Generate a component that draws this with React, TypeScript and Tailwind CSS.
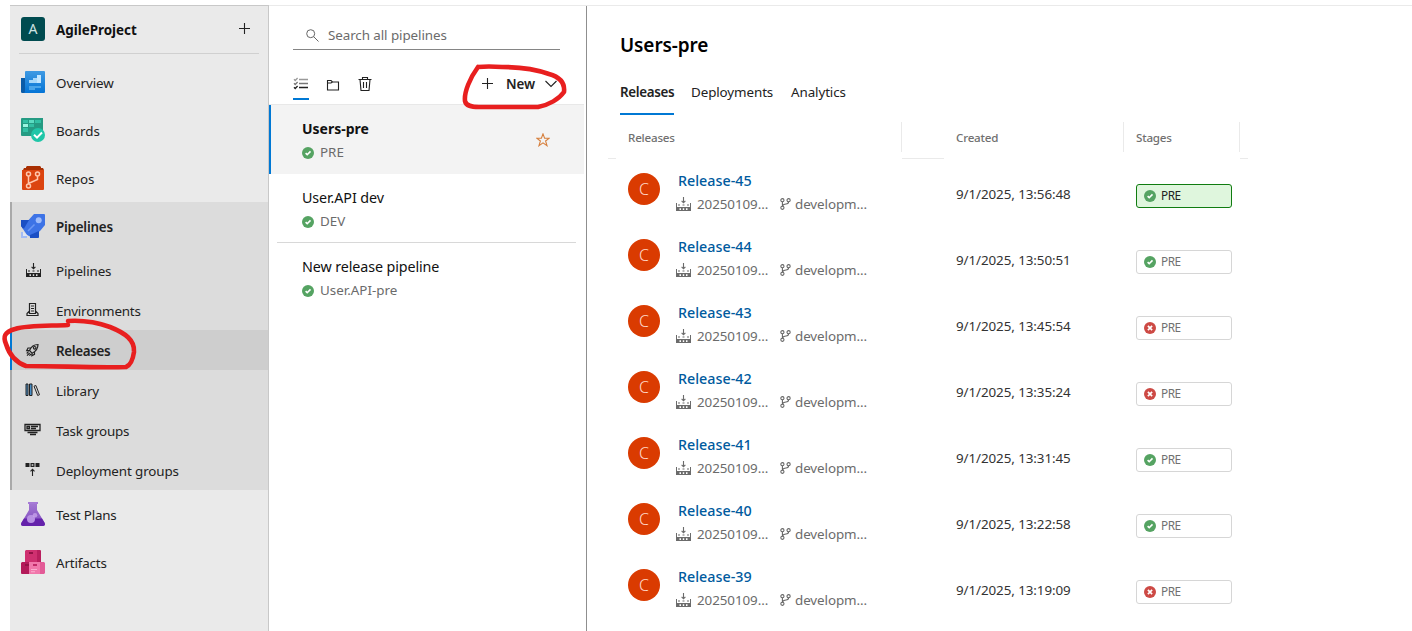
import React from 'react';

type IconProps = { className?: string };

const Check = ({ className = '' }: IconProps) => (
  <svg className={`h-3 w-3 shrink-0 ${className}`} viewBox="0 0 12 12">
    <circle cx="6" cy="6" r="6" fill="#55a362" />
    <path d="M3.6 6.2 5.2 7.7 8.5 4.4" fill="none" stroke="#fff" strokeWidth="1.6" />
  </svg>
);

const Fail = () => (
  <svg className="h-3 w-3 shrink-0" viewBox="0 0 12 12">
    <circle cx="6" cy="6" r="6" fill="#cd4a45" />
    <path d="M3.9 3.9 8.1 8.1M8.1 3.9 3.9 8.1" fill="none" stroke="#fff" strokeWidth="1.7" />
  </svg>
);

const Plus = () => (
  <svg className="h-3 w-3 shrink-0" viewBox="0 0 12 12">
    <path d="M5.5 0V11M0 5.5H11" fill="none" stroke="#222" strokeWidth="1.1" />
  </svg>
);

const OverviewIcon = () => (
  <svg className="h-6 w-6" viewBox="0 0 24 24">
    <defs>
      <linearGradient id="ov" x1="0" y1="0" x2="0" y2="1">
        <stop offset="0" stopColor="#3f9ae3" />
        <stop offset="1" stopColor="#0474d6" />
      </linearGradient>
    </defs>
    <path d="M0 8h4v15H1.2Q0 23 0 21.8z" fill="#0b5ca8" />
    <path d="M5 1h18q1 0 1 1v20q0 1-1 1H3q1-.5 1-2V2q0-1 1-1z" fill="url(#ov)" />
    <path d="M8 10h4V8h4V5h4v8H8z" fill="#a8d8fa" />
    <path d="M16 5h4v8h-4z" fill="#c3e6ff" />
    <path d="M8 16h12v2h-6v2H8z" fill="#4aa5ea" />
  </svg>
);

const BoardsIcon = () => (
  <svg className="h-6 w-6" viewBox="0 0 24 24">
    <path d="M1 0h21v18H1q-1 0-1-1V1q0-1 1-1z" fill="#259b83" />
    <path d="M2 2h5v3H2zM14 2h6v3h-6zM8 6h5v3H8zM2 10h5v4H2z" fill="#32c0a4" />
    <path d="M8 2h5v3H8z" fill="#5cdcc2" />
    <path d="M2 6h5v3H2z" fill="#9bf5e0" />
    <circle cx="17" cy="17" r="7" fill="#1fc6a8" />
    <path d="M13 16.8 16 19.7 21 14.5" fill="none" stroke="#fff" strokeWidth="2" />
  </svg>
);

const ReposIcon = () => (
  <svg className="h-6 w-6" viewBox="0 0 24 24">
    <path d="M6 0h13l1 1v1h2l1 2H2l1-2h2V1z" fill="#a92f02" />
    <path d="M1 4h22v19q0 1-1 1H2q-1 0-1-1z" fill="#dc4410" />
    <g fill="none" stroke="#ffc6ac" strokeWidth="1.5">
      <circle cx="7.5" cy="8" r="2" />
      <circle cx="16.5" cy="8" r="2" />
      <circle cx="7.5" cy="20" r="2" />
      <path d="M7.5 10v8M16.5 10v3.5L8 17.3" />
    </g>
  </svg>
);

const PipelinesBig = () => (
  <svg className="h-6 w-6" viewBox="0 0 24 24">
    <path d="M0 6h9l-4 9H2l-2-3zM9 19l9-8v12l-1 1H9z" fill="#174ac0" />
    <path d="M13 0h10q1 0 1 1v10l-5 6-9 6-4-2-4-6 2-5z" fill="#3d73e6" />
    <path d="M0 6h8l-5 8.5L0 12zM18 17v6l-1 1H9v-3z" fill="#1b4fc4" />
    <circle cx="17.7" cy="6.3" r="3" fill="#9fbdfb" />
    <path d="M7 17 13.5 10.5" stroke="#6b97f4" strokeWidth="1.6" />
    <path d="M0 18h2v4h4v2H0z" fill="#a3bcf5" />
    <path d="M2 17.5l5 4.5H2z" fill="#e0e6f3" />
  </svg>
);

const TestPlansIcon = () => (
  <svg className="h-6 w-6" viewBox="0 0 24 24">
    <defs>
      <linearGradient id="tp" x1="0" y1="0" x2="0" y2="1">
        <stop offset="0" stopColor="#a479d3" />
        <stop offset="1" stopColor="#7d48bd" />
      </linearGradient>
    </defs>
    <path d="M8 1h8v7l7.7 13q.8 3-1.7 3H2Q-.5 24 .3 21L8 8z" fill="url(#tp)" />
    <path d="M3 16.5h18l2.7 4.5q.8 3-1.7 3H2Q-.5 24 .3 21z" fill="#6522ab" />
    <path d="M7 0h10v2H7z" fill="#a67bd6" />
    <circle cx="10" cy="17" r="4" fill="#b891e4" />
    <circle cx="14" cy="13.3" r="2.3" fill="#c9a5ec" fillOpacity=".75" />
  </svg>
);

const ArtifactsIcon = () => (
  <svg className="h-6 w-6" viewBox="0 0 24 24">
    <path d="M5 0h14l1 1v11H4V1z" fill="#cf3070" />
    <path d="M16 0h3l1 1v11h-4z" fill="#b91f5e" />
    <path d="M1 12h7v12H1q-1 0-1-1V13z" fill="#b31a59" />
    <path d="M8 12h11v12H8z" fill="#f177ab" />
    <path d="M19 12h4l1 1v10l-1 1h-4z" fill="#e35b97" />
    <path d="M8 2h4v2H8zM4 14h4v2H4z" fill="#931246" />
    <path d="M12 14h4v2h-4z" fill="#c22b69" />
    <path d="M10 19h6v1h-6zM10 21.3h4v1h-4z" fill="#fbaed0" />
  </svg>
);

const Build = ({ className = '' }: IconProps) => (
  <svg className={`h-[15px] w-[15px] shrink-0 ${className}`} viewBox="0 0 15 15">
    <path d="M7.5 0v5.6M5.6 3.8 7.5 5.7l1.9-1.9" fill="none" stroke="currentColor" strokeWidth="1.1" />
    <path
      d="M0 6h1v4h13V6h1v8H0zM2 7.5h2v1H2zM6.5 7.5h2v1h-2zM11 7.5h2v1h-2zM3.5 11.2V13H5v-1.8zM6.8 11.2V13h1.4v-1.8zM10 11.2V13h1.5v-1.8z"
      fill="currentColor"
      fillRule="evenodd"
    />
  </svg>
);

const Env = () => (
  <svg className="h-4 w-4" viewBox="0 0 16 16" fill="none" stroke="#222" strokeWidth="1.2">
    <path d="M4.5 11.5v-10h6v10zM6 4h3M6 6.5h3M6 9h3M4.5 9 2 11.5v2h11v-2L10.5 9M1.5 13.5h12" />
  </svg>
);

const Rocket = () => (
  <svg className="h-4 w-4" viewBox="0 0 16 16" fill="none" stroke="#222" strokeWidth="1.2">
    <path d="M4.5 8.5Q7 2.5 13 2.5q0 6-6 8.7zM5.5 6H3L1.7 8.7l2.8-.2M9.5 10v2.4l-2.6 1.3.2-2.6M3.5 9.7l-1.8 1.8M4.7 11 2 13.6M6 12l-1.6 1.7" />
    <circle cx="9.7" cy="5.8" r="1.3" />
  </svg>
);

const Library = () => (
  <svg className="h-4 w-4" viewBox="0 0 16 16" fill="none" stroke="#222" strokeWidth="1">
    <path d="M1 2h2v11.5H1zM4.5 2H7v11.5H4.5z" fill="#4a8fc7" />
    <path d="M9 4.2 10.9 3.5 14.5 12.7 12.7 13.5z" />
  </svg>
);

const TaskGroups = () => (
  <svg className="h-[18px] w-[18px]" viewBox="0 0 18 18" fill="none" stroke="#222" strokeWidth="1.3">
    <path d="M1 3.5h15v6H1zM3 5.5h2.5v2H3zM7 5.5h7M7 7.5h5M3.5 11.5h10M6 13.5h6" />
  </svg>
);

const DeployGroups = () => (
  <svg className="h-4 w-4" viewBox="0 0 16 16">
    <path d="M.5 1h4v4h-4zM5.5 1h4v4h-4zM10.5 1h4v4h-4zM6.7 2.2v1.6h1.6V2.2z" fill="#222" fillRule="evenodd" />
    <path d="M7.5 14V7.5M5.5 9.3 7.5 7.3l2 2" stroke="#222" fill="none" strokeWidth="1.1" />
  </svg>
);

const Branch = () => (
  <svg className="h-3 w-[11px] shrink-0" viewBox="0 0 11 12" fill="none" stroke="#666" strokeWidth="1.1">
    <circle cx="2.4" cy="2.2" r="1.6" />
    <circle cx="8.6" cy="2.2" r="1.6" />
    <circle cx="2.4" cy="9.8" r="1.6" />
    <path d="M2.4 3.8v4.4M8.6 3.8Q8.6 6 6 6T2.4 8" />
  </svg>
);

const mainText = 'text-[13.4px] text-[#222]';

const NavItem = ({ icon, label, text = 'tracking-[-0.08px]' }: { icon: React.ReactNode; label: string; text?: string }) => (
  <div className="flex h-12 items-center pl-[11px]">
    <span className="flex w-[35px]">{icon}</span>
    <span className={`${mainText} pt-0.5 ${text}`}>{label}</span>
  </div>
);

const SubItem = ({ icon, label, text = 'tracking-[-0.12px]' }: { icon: React.ReactNode; label: string; text?: string }) => (
  <div className="flex h-10 items-center pl-[9px]">
    <span className="mr-[11px] flex w-6 justify-center">{icon}</span>
    <span className={`${mainText} pt-[3px] ${text}`}>{label}</span>
  </div>
);

const Sidebar = () => (
  <nav className="ml-2.5 flex w-[259px] shrink-0 flex-col border-r border-t border-[#c8c8c8] bg-[#eaeaea]">
    <div className="mx-[9px] flex h-[48px] items-center border-b border-[#d0d0d0] pl-0.5 pr-2">
      <span className="mb-px flex h-6 w-6 items-center justify-center rounded-[3px] bg-[#004b50] text-sm text-[#cfe3e3]">A</span>
      <span className="ml-[11px] flex-1 pt-0.5 text-[13.4px] font-bold text-[#111]">AgileProject</span>
      <div className="mb-0.5">
        <Plus />
      </div>
    </div>
    <div className="h-1" />
    <NavItem icon={<OverviewIcon />} label="Overview" />
    <NavItem icon={<BoardsIcon />} label="Boards" />
    <NavItem icon={<ReposIcon />} label="Repos" />
    <div className="border-l-2 border-[#a9a9a9] bg-[#dcdcdc]">
      <div className="-ml-0.5">
        <NavItem icon={<PipelinesBig />} label="Pipelines" text="font-semibold tracking-[-0.22px]" />
      </div>
      <SubItem icon={<Build className="text-[#222]" />} label="Pipelines" />
      <SubItem icon={<Env />} label="Environments" text="tracking-[-0.22px]" />
      <div className="-ml-0.5 border-l-2 border-[#0078d4] bg-[#cecece]">
        <SubItem icon={<Rocket />} label="Releases" text="font-semibold tracking-[-0.32px]" />
      </div>
      <SubItem icon={<Library />} label="Library" />
      <SubItem icon={<TaskGroups />} label="Task groups" text="tracking-[-0.2px]" />
      <SubItem icon={<DeployGroups />} label="Deployment groups" />
    </div>
    <NavItem icon={<TestPlansIcon />} label="Test Plans" text="tracking-[-0.2px]" />
    <NavItem icon={<ArtifactsIcon />} label="Artifacts" text="tracking-[-0.15px]" />
  </nav>
);

const PipelineItem = ({ name, stage }: { name: string; stage: string }) => (
  <div className="flex flex-col pt-0.5">
    <span className="text-[14.3px] leading-6 tracking-[-0.1px] text-[#111]">{name}</span>
    <span className="flex h-6 items-center gap-1.5 text-[13.4px] text-[#6b6b6b]">
      <Check />
      {stage}
    </span>
  </div>
);

const Middle = () => (
  <section className="flex w-[318px] shrink-0 flex-col border-r border-[#8f8f8f]">
    <div className="ml-6 mr-[26px] mt-[15px] flex h-[29px] items-center border-b border-[#858585] pl-[13px] text-[13.4px] tracking-[-0.08px] text-[#6b6b6b]">
      <svg className="mr-[9px] h-[13px] w-[13px]" viewBox="0 0 13 13" fill="none" stroke="#666" strokeWidth="1">
        <circle cx="4.7" cy="4.7" r="4" />
        <path d="M7.6 7.6 12.5 12.5" />
      </svg>
      <span>Search all pipelines</span>
    </div>
    <div className="mr-0.5 mt-[18px] flex h-[37px] items-start border-b border-[#e8e8e8] pl-6">
      <div className="flex h-8 w-4 items-center justify-center border-b-2 border-[#0078d4]">
        <svg className="h-4 w-4" viewBox="0 0 16 16" fill="none">
          <path d="M6 4.5h9M1 4.3l1.2 1.2L4.6 3" stroke="#999" strokeWidth="1.3" />
          <path d="M6 8.5h9M1 8.3 2.2 9.5 4.6 7" stroke="#777" strokeWidth="1.3" />
          <path d="M6 12.5h9M1 12.3 2.2 13.5l2.4-2.5" stroke="#222" strokeWidth="1.3" />
        </svg>
      </div>
      <div className="ml-4 flex h-[34px] w-4 items-center justify-center">
        <svg className="h-4 w-4" viewBox="0 0 16 16" fill="none" stroke="#222" strokeWidth="1.1">
          <path d="M2.5 3.5h3.5l1.5 1.5h6v8h-11zM2.5 6h3.5l1.5-1" />
        </svg>
      </div>
      <div className="ml-4 flex h-8 w-4 items-center justify-center">
        <svg className="h-4 w-4" viewBox="0 0 16 16" fill="none" stroke="#222" strokeWidth="1.1">
          <path d="M1.5 3.5h13M5.5 3V1.5h5V3M3 3.5l1 11h8l1-11M6.5 6v6M9.5 6v6" />
        </svg>
      </div>
      <div className="ml-[109px] flex h-8 items-center">
        <Plus />
        <span className="ml-3 w-[39px] text-[13.4px] font-semibold tracking-[-0.1px] text-[#222]">New</span>
        <svg className="h-3 w-3" viewBox="0 0 12 12" fill="none" stroke="#222" strokeWidth="1.1">
          <path d="M.5 3 6 8.5 11.5 3" />
        </svg>
      </div>
    </div>
    <div className="mr-0.5 flex h-[69px] items-center justify-between border-l-2 border-[#0078d4] bg-[#f3f3f3] pl-[31px] pr-[34px]">
      <div className="flex flex-col pt-0.5">
        <span className="text-[14px] font-bold leading-6 text-[#111]">Users-pre</span>
        <span className="flex h-6 items-center gap-1.5 text-[13.4px] text-[#6b6b6b]">
          <Check />
          PRE
        </span>
      </div>
      <svg className="h-[14px] w-[14px]" viewBox="0 0 14 14" fill="none" stroke="#d67f3c" strokeWidth="1.1">
        <path d="M7 .9 8.6 5.2H13.3L9.6 8 11 12.7 7 9.9 3 12.7 4.4 8 .7 5.2H5.4z" />
      </svg>
    </div>
    <div className="ml-2 mr-2.5 flex h-[69px] items-center border-b border-[#d8d8d8] pl-[25px] pt-px">
      <PipelineItem name="User.API dev" stage="DEV" />
    </div>
    <div className="ml-2 flex h-[69px] items-center pl-[25px]">
      <PipelineItem name="New release pipeline" stage="User.API-pre" />
    </div>
  </section>
);

const releases = [
  { id: 45, time: '13:56:48', ok: true },
  { id: 44, time: '13:50:51', ok: true },
  { id: 43, time: '13:45:54', ok: false },
  { id: 42, time: '13:35:24', ok: false },
  { id: 41, time: '13:31:45', ok: true },
  { id: 40, time: '13:22:58', ok: true },
  { id: 39, time: '13:19:09', ok: false },
];

const ReleaseRow = ({ id, time, ok, current }: { id: number; time: string; ok: boolean; current: boolean }) => (
  <div className="flex h-[66px] items-start pl-5">
    <span className="mt-[14px] flex h-8 w-8 items-center justify-center rounded-full bg-[#da3b01] text-base font-light text-[#ffd9c9]">C</span>
    <div className="ml-[17px] w-[279px] pt-[11px]">
      <div className="pl-px text-[14.3px] font-medium leading-[22px] text-[#005a9e]">Release-{id}</div>
      <div className="flex h-6 items-center text-[13.4px] text-[#6b6b6b]">
        <Build className="-ml-px" />
        <span className="ml-1.5 w-[83px] tracking-[-0.08px]">20250109...</span>
        <Branch />
        <span className="ml-1 tracking-[-0.08px]">developm...</span>
      </div>
    </div>
    <span className="w-[180px] pt-[25px] text-[13.4px] leading-5 tracking-[-0.08px] text-[#333]">9/1/2025, {time}</span>
    <span
      className={`mt-[25px] flex h-6 w-24 items-center gap-[5px] rounded-[3px] border pl-[7px] text-[11.8px] tracking-[-0.5px] ${
        current ? 'border-[#107c10] bg-[#dff6dd] text-[#222]' : 'border-[#d6d6d6] text-[#707070]'
      }`}
    >
      {ok ? <Check /> : <Fail />}
      PRE
    </span>
  </div>
);

const Main = () => (
  <main className="flex min-w-0 flex-1 flex-col">
    <h1 className="ml-[33px] mt-[25px] text-[19px] font-semibold leading-[28px] tracking-[-0.1px] text-black">Users-pre</h1>
    <div className="ml-[33px] mt-[12px] flex h-[44px] gap-[17px] text-[13.4px] leading-[43px] text-[#222]">
      <span className="w-[54px] border-b-2 border-[#0078d4] font-semibold tracking-[-0.34px]">Releases</span>
      <span className="w-[83px] tracking-[-0.1px]">Deployments</span>
      <span className="tracking-[-0.1px]">Analytics</span>
    </div>
    <div className="ml-[21px] flex h-[44px] items-stretch text-[11.6px] font-medium leading-[45px] tracking-[-0.2px] text-[#707070]">
      <div className="w-2 border-b border-[#eaeaea]" />
      <div className="flex w-[286px] items-start justify-between pl-3">
        Releases
        <i className="mt-[7px] h-[30px] w-px bg-[#eaeaea]" />
      </div>
      <div className="w-[42px] border-b border-[#eaeaea]" />
      <div className="flex w-[180px] items-start justify-between pl-3">
        Created
        <i className="mt-[7px] h-[30px] w-px bg-[#eaeaea]" />
      </div>
      <div className="flex w-[116px] items-start justify-between pl-3">
        Stages
        <i className="mt-[7px] h-[30px] w-px bg-[#eaeaea]" />
      </div>
      <div className="w-2 border-b border-[#eaeaea]" />
    </div>
    <div className="pl-[21px]">
      {releases.map((r, i) => (
        <ReleaseRow key={r.id} {...r} current={i === 0} />
      ))}
    </div>
  </main>
);

export default function App() {
  return (
    <div className="relative h-[631px] w-[1412px] overflow-hidden bg-white pt-[5px] font-['Noto_Sans','Open_Sans',sans-serif]">
      <div className="flex h-[626px]">
        <Sidebar />
        <div className="flex min-w-0 flex-1 border-t border-[#eaeaea]">
          <Middle />
          <Main />
        </div>
      </div>
      <svg
        className="pointer-events-none absolute left-0 top-0 h-[631px] w-[1412px]"
        viewBox="0 0 1412 631"
        fill="none"
        stroke="#e81f1f"
        strokeWidth="4.6"
        strokeLinecap="round"
        strokeLinejoin="round"
      >
        <path d="M68 325C50 326 28 325 15 329C4 332 3 337 6 344C9 354 15 362 26 366C60 366 95 368 126 367C131 365 133 359 134 352C135 340 125 333 110 327C96 322 82 320 68 321" />
        <path d="M478 67C470 78 464 92 465 101C466 106 471 107 479 107H538C549 105 559 99 564 92C565 83 560 77 549 74C535 69 518 67 502 67Q488 66 478 67" />
      </svg>
    </div>
  );
}
